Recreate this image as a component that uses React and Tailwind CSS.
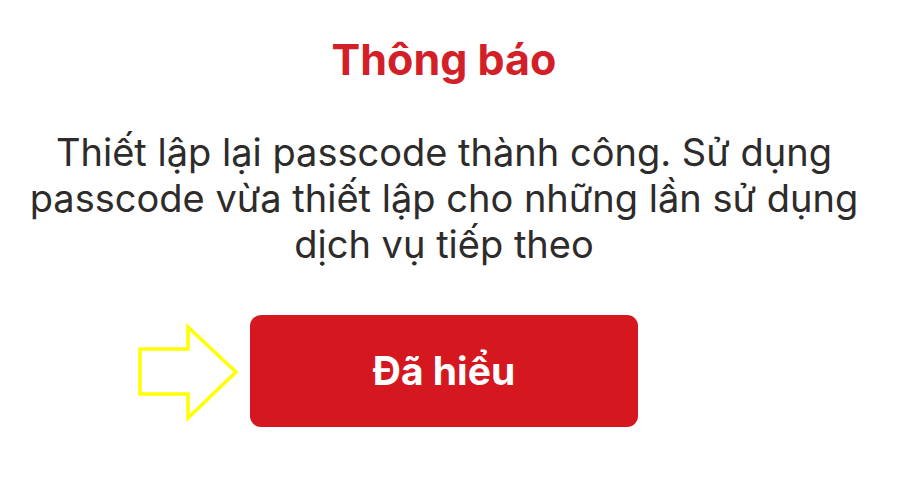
export default function App() {
  return (
    <div className="w-[900px] h-[490px] bg-white">
      <div className="w-[888px] flex flex-col items-center" style={{ fontFamily: 'Inter, "Noto Sans", sans-serif' }}>
        <h1 className="mt-[33px] text-[43px] leading-[52px] font-bold text-[#d31f28]">Thông báo</h1>
        <p className="mt-[44px] text-center text-[38px] leading-[46px] text-[#2e2b2b] whitespace-nowrap">
          Thiết lập lại passcode thành công. Sử dụng
          <br />
          passcode vừa thiết lập cho những lần sử dụng
          <br />
          dịch vụ tiếp theo
        </p>
        <div className="relative mt-[48px]">
          <button className="w-[388px] h-[112px] rounded-[11px] bg-[#d5171f] text-white text-[39px] font-bold">
            Đã hiểu
          </button>
          <svg className="absolute left-[-112px] top-[7px]" width="104" height="100" viewBox="138 322 104 100">
            <polygon points="140,349 188,349 188,327 236,372 188,418 188,394 140,394" fill="none" stroke="#ffff00" strokeWidth="3.5" strokeLinejoin="miter" />
          </svg>
        </div>
      </div>
    </div>
  );
}
